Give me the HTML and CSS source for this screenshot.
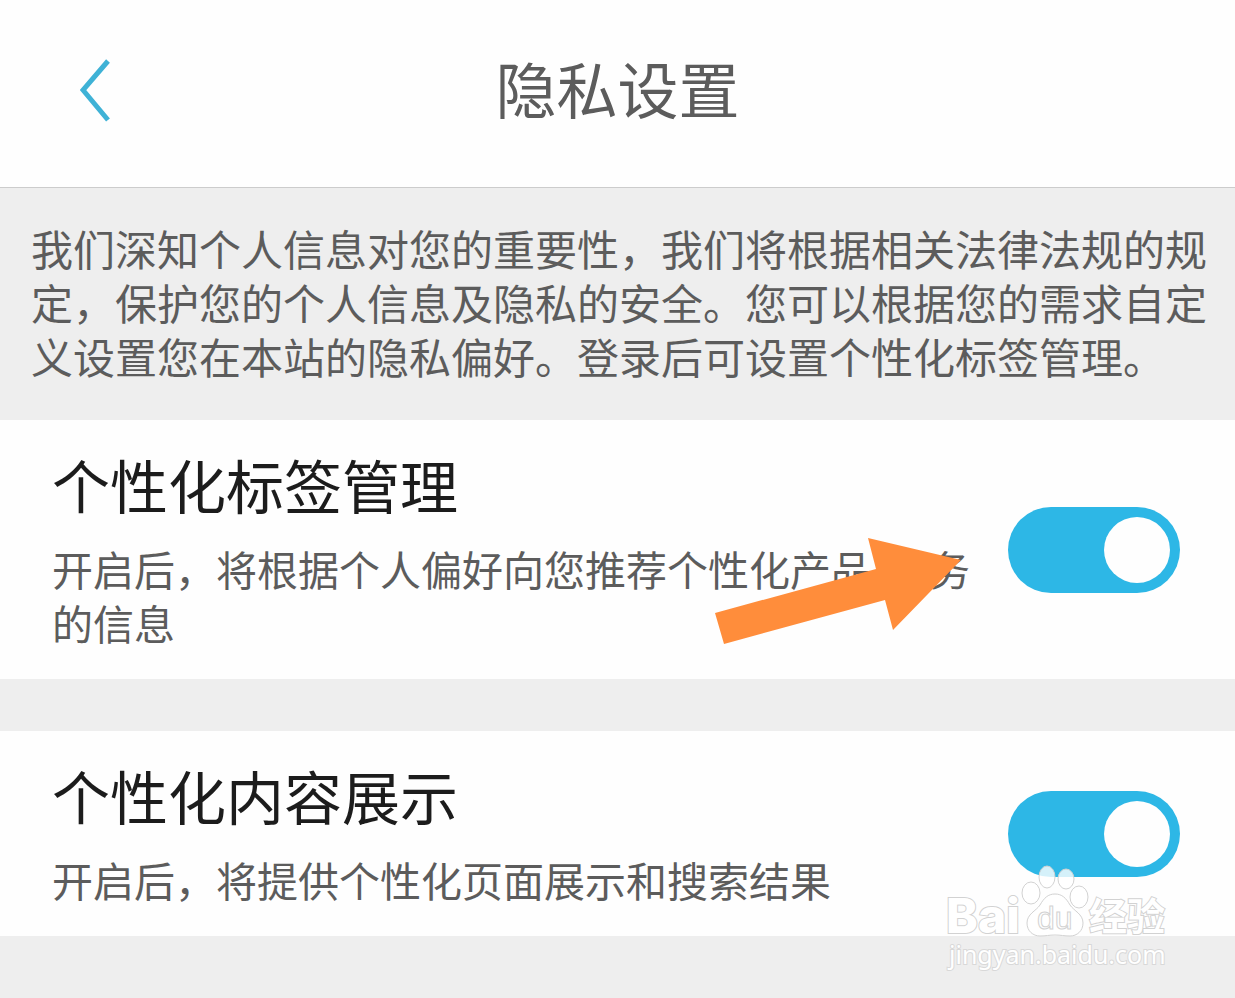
FILE: index.html
```
<!DOCTYPE html>
<html lang="zh-CN">
<head>
  <meta charset="UTF-8">
  <title>隐私设置</title>
  <meta name="viewport" content="width=device-width, initial-scale=1.0">
  <link rel="stylesheet" href="styles.css">
</head>
<body>

<header class="header">
  <button class="back" type="button" aria-label="返回">
    <svg width="32" height="64" viewBox="0 0 32 64">
      <polyline points="28 3 3 32 28 62" fill="none" stroke="#3fb2d6" stroke-width="5"/>
    </svg>
  </button>
  <h1 class="title">隐私设置</h1>
</header>

<main>
  <p class="intro">我们深知个人信息对您的重要性，我们将根据相关法律法规的规定，保护您的个人信息及隐私的安全。您可以根据您的需求自定义设置您在本站的隐私偏好。登录后可设置个性化标签管理。</p>

  <section class="setting">
    <div class="setting-text">
      <h2><label for="tags">个性化标签管理</label></h2>
      <p>开启后，将根据个人偏好向您推荐个性化产品/服务的信息</p>
    </div>
    <input class="switch" type="checkbox" id="tags" checked>
    <svg class="arrow" width="248" height="110" viewBox="0 0 248 110">
      <polygon points="0 76 161 32 153 1 246 23 178 93 170 63 9 107" fill="#ff8d3b"/>
    </svg>
  </section>

  <section class="setting">
    <div class="setting-text">
      <h2><label for="content">个性化内容展示</label></h2>
      <p>开启后，将提供个性化页面展示和搜索结果</p>
    </div>
    <input class="switch" type="checkbox" id="content" checked>
    <svg class="watermark" width="235" height="114" viewBox="0 0 235 114">
      <text class="mark-brand" x="6" y="71">Bai</text>
      <g class="mark-paw">
        <ellipse cx="91" cy="31" rx="9" ry="11"/>
        <ellipse cx="107" cy="15" rx="8" ry="11"/>
        <ellipse cx="126" cy="17" rx="8" ry="10"/>
        <ellipse cx="139" cy="35" rx="9" ry="11"/>
        <path d="M115 32c-7 0-11 4-15 11-4 6-13 9-13 18 0 8 6 13 13 13 6 0 9-1 15-1s9 1 15 1c7 0 13-5 13-13 0-9-9-12-13-18-4-7-8-11-15-11z"/>
      </g>
      <text class="mark-du" x="97" y="67">du</text>
      <text class="mark-cn" x="149" y="68">经验</text>
      <text class="mark-url" x="9" y="102">jingyan.baidu.com</text>
    </svg>
  </section>
</main>

</body>
</html>
```
FILE: styles.css
```
body {
  margin: 0;
  background: #eeeeee;
  color: #5c5c5c;
  font-family: "Noto Sans CJK SC", sans-serif;
}

h1, h2, p {
  margin: 0;
  font-weight: 400;
}

.header {
  display: grid;
  grid-template-columns: 124px 1fr 124px;
  align-items: center;
  height: 187px;
  background: #fefefe;
  border-bottom: 1px solid #cccccc;
}

.back {
  justify-self: end;
  margin-right: 12px;
  margin-bottom: 8px;
  padding: 0;
  border: 0;
  background: none;
  cursor: pointer;
}

.back svg {
  display: block;
}

.title {
  margin-bottom: 12px;
  font-size: 61px;
  line-height: 84px;
  text-align: center;
}

.intro {
  padding: 33px 28px 37px 31px;
  font-size: 42px;
  line-height: 54px;
}

.setting {
  position: relative;
  display: flex;
  align-items: center;
  justify-content: space-between;
  gap: 20px;
  padding: 0 55px 0 52px;
  margin-bottom: 52px;
  background: #fefefe;
}

.setting-text {
  padding: 22px 0 30px;
}

.setting h2 {
  margin-bottom: 15px;
  font-size: 58px;
  line-height: 84px;
  color: #1c1c1c;
}

.setting p {
  font-size: 41px;
  line-height: 54px;
}

.switch {
  appearance: none;
  flex: none;
  display: flex;
  justify-content: flex-start;
  width: 172px;
  height: 86px;
  margin: 0;
  padding: 10px;
  box-sizing: border-box;
  border-radius: 43px;
  background: #cccccc;
  cursor: pointer;
}

.switch::before {
  content: "";
  width: 66px;
  height: 66px;
  border-radius: 50%;
  background: #fefefe;
}

.switch:checked {
  justify-content: flex-end;
  background: #2db7e6;
}

/* overlays */
.arrow {
  position: absolute;
  top: 117px;
  right: 272px;
  pointer-events: none;
}

.watermark {
  position: absolute;
  top: 131px;
  right: 60px;
  pointer-events: none;
  fill: #ffffff;
  stroke: #d2d2d2;
  stroke-width: 1px;
}

.mark-paw {
  fill-opacity: 0.8;
}

.mark-brand {
  font: 800 48px Inter, sans-serif;
  stroke-width: 2px;
  paint-order: stroke;
}

.mark-du {
  font: 32px "Liberation Sans", sans-serif;
}

.mark-cn {
  font: bold 38px "Noto Sans CJK SC", sans-serif;
  stroke-width: 2px;
  paint-order: stroke;
}

.mark-url {
  font: 25px "Noto Sans", sans-serif;
  stroke: #d8d8d8;
  stroke-width: 2px;
  paint-order: stroke;
}
```
